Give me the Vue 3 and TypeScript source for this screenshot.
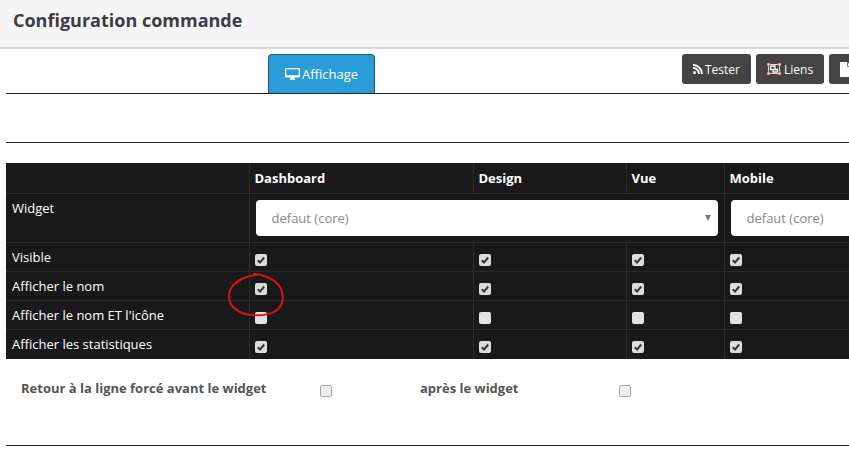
<template>
  <div class="page">
    <header class="title-bar">
      <h4>Configuration commande</h4>
    </header>

    <div class="tab-row">
      <a class="tab">
        <svg class="ico" width="15" height="12" viewBox="0 0 14 12" preserveAspectRatio="none">
          <path fill="#fff" fill-rule="evenodd" d="M1 0h12a1 1 0 0 1 1 1v7.5a1 1 0 0 1-1 1H8.6c.1.8.4 1.2.9 1.6v.9H4.5v-.9c.5-.4.8-.8.9-1.6H1a1 1 0 0 1-1-1V1a1 1 0 0 1 1-1zm.2 1.2v6h11.6v-6z" />
        </svg>
        Affichage
      </a>
      <div class="actions">
        <a class="btn tight">
          <svg class="ico" width="10" height="10" viewBox="0 0 10 10">
            <circle cx="1.5" cy="8.500" r="1.5" fill="#fff" />
            <path d="M0 3.900a6.100 6.100 0 0 1 6.100 6.100M0 1a9 9 0 0 1 9 9" fill="none" stroke="#fff" stroke-width="2" />
          </svg>
          Tester
        </a>
        <a class="btn">
          <svg class="ico" width="14" height="12" viewBox="0 0 14 12">
            <path d="M1.500 1.500h11v9h-11z" fill="none" stroke="#ddd" stroke-width="1" />
            <path d="M3.500 3h4.500v3.500H3.500zM6 6.500h4.500V9H6z" fill="none" stroke="#fff" stroke-width="1.300" />
            <path d="M0 0h3v3H0zM11 0h3v3h-3zM0 9h3v3H0zM11 9h3v3h-3z" fill="#f4e4e4" stroke="#c0484e" stroke-width=".8" />
          </svg>
          Liens
        </a>
        <a class="btn wide">
          <svg class="ico" width="12" height="15" viewBox="0 0 12 15">
            <path d="M0 0h7.500L12 4.500V15H0z" fill="#fff" />
            <path d="M7.500 0v4.500H12" fill="none" stroke="#555" stroke-width=".8" />
          </svg>
        </a>
      </div>
    </div>

    <hr class="rule first" />

    <table class="grid">
      <colgroup>
        <col class="c-label" />
        <col class="c-dash" />
        <col class="c-design" />
        <col class="c-vue" />
        <col class="c-mobile" />
      </colgroup>
      <thead>
        <tr>
          <th></th>
          <th v-for="col in columns" :key="col">{{ col }}</th>
        </tr>
      </thead>
      <tbody>
        <tr class="widget-row">
          <td>Widget</td>
          <td colspan="3">
            <div class="select main">
              <span>defaut (core)</span>
              <i class="caret"></i>
            </div>
          </td>
          <td>
            <div class="select">
              <span>defaut (core)</span>
            </div>
          </td>
        </tr>
        <tr v-for="row in rows" :key="row.label">
          <td>{{ row.label }}</td>
          <td v-for="col in columns" :key="col">
            <span :class="['check', { on: row.checked }]">
              <svg v-if="row.checked" width="12" height="12" viewBox="0 0 12 12">
                <path d="M2.800 6.300l2.200 2.300 4.200-5.100" fill="none" stroke="#333" stroke-width="2" />
              </svg>
            </span>
          </td>
        </tr>
      </tbody>
    </table>

    <div class="breaks">
      <label class="before">Retour à la ligne forcé avant le widget</label>
      <span class="box"></span>
      <label class="after">après le widget</label>
      <span class="box"></span>
    </div>

    <hr class="rule last" />

    <svg class="circle" width="60" height="50" viewBox="0 0 60 50">
      <path
        d="M30 3C20 3 8 9 3.500 17 1 23 2 31 6 35c5 5 13 8 20 8 9 1 19-1 24-5 5-4 7-10 5-18-1-6-7-12-15-15-5-2-10-3-14-3"
        fill="none"
        stroke="#dc1016"
        stroke-width="2"
      />
    </svg>
  </div>
</template>

<script setup lang="ts">
const columns = ["Dashboard", "Design", "Vue", "Mobile"];

const rows = [
  { label: "Visible", checked: true },
  { label: "Afficher le nom", checked: true },
  { label: "Afficher le nom ET l'icône", checked: false },
  { label: "Afficher les statistiques", checked: true },
];
</script>

<style>
html,
body {
  margin: 0;
  overflow: hidden;
  background: #fff;
}
</style>

<style scoped>
.page {
  position: relative;
  width: 849px;
  height: 452px;
  overflow: hidden;
  font-family: "Open Sans", "Noto Sans", sans-serif;
  font-size: 13px;
  color: #fff;
}
.title-bar {
  height: 47px;
  background: #f5f5f5;
  border-bottom: 2px solid #d8d8d8;
  display: flex;
  align-items: center;
  padding-left: 13px;
}
.title-bar h4 {
  margin: 0 0 8px;
  font-size: 18px;
  font-weight: 700;
  color: #3c3c44;
}
.tab-row {
  display: flex;
  align-items: flex-start;
  width: 1000px;
  height: 39px;
  margin: 5px 0 0 6px;
  padding-left: 262px;
  border-bottom: 1px solid #222;
}
.tab {
  width: 107px;
  height: 39px;
  box-sizing: border-box;
  display: flex;
  align-items: center;
  justify-content: center;
  gap: 2px;
  background: #2a9cd8;
  border: 1px solid #1c5a7c;
  border-bottom: 0;
  border-radius: 4px 4px 0 0;
  color: #fff;
}
.actions {
  display: flex;
  gap: 5px;
  margin-left: 307px;
}
.btn {
  height: 30px;
  padding: 0 11px;
  display: flex;
  align-items: center;
  gap: 3px;
  background: #444;
  border-radius: 3px;
  font-size: 12px;
  color: #fff;
}
.btn.tight {
  gap: 2px;
}
.btn.wide {
  width: 60px;
}
.ico {
  flex: none;
}
.rule {
  height: 1px;
  border: 0;
  background: #222;
  margin: 0 0 0 6px;
}
.rule.first {
  margin-top: 48px;
}
.rule.last {
  margin-top: 18px;
}
.grid {
  table-layout: fixed;
  border-collapse: collapse;
  width: 1000px;
  margin: 20px 0 0 6px;
  background: #191919;
}
.c-label {
  width: 243px;
}
.c-dash {
  width: 224px;
}
.c-design {
  width: 153px;
}
.c-vue {
  width: 98px;
}
.grid th,
.grid td {
  padding: 5px;
  text-align: left;
  vertical-align: top;
  border-left: 1px solid #2c2c2c;
  border-top: 1px solid #2c2c2c;
  line-height: 18px;
  height: 18px;
}
.grid th {
  height: 19px;
  font-weight: 700;
  padding-top: 6px;
}
.grid tr th:first-child,
.grid tr td:first-child {
  border-left: 0;
  padding-left: 6px;
}
.grid thead th {
  border-top: 0;
}
.grid tbody tr:last-child td {
  height: 19px;
}
.widget-row td {
  height: 38px;
}
.select {
  position: relative;
  height: 36px;
  margin: 1px 0 0 1px;
  display: flex;
  align-items: center;
  padding-left: 16px;
  background: #fff;
  border-radius: 4px;
  color: #888;
}
.select.main {
  margin-right: 1px;
}
.caret {
  position: absolute;
  right: 7px;
  top: 15px;
  border-left: 3px solid transparent;
  border-right: 3px solid transparent;
  border-top: 6px solid #777;
}
.check {
  display: block;
  width: 12px;
  height: 12px;
  margin-top: 6px;
  background: #e2e2e2;
  border-radius: 2px;
}
.check.on {
  background: #dcdcdc;
}
.check svg {
  display: block;
}
.breaks {
  display: flex;
  align-items: flex-start;
  height: 48px;
  margin-top: 20px;
  padding-left: 21px;
  color: #555;
  font-weight: 700;
}
.before {
  width: 299px;
  line-height: 19px;
}
.after {
  width: 199px;
  margin-left: 88px;
  line-height: 19px;
}
.box {
  width: 10px;
  height: 10px;
  margin-top: 6px;
  flex: none;
  background: #eee;
  border: 1px solid #aaa;
  border-radius: 2px;
}
.circle {
  position: absolute;
  left: 227px;
  top: 272px;
  pointer-events: none;
}
</style>
